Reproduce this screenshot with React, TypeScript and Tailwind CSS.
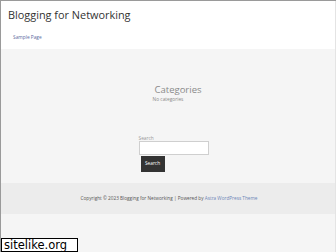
import React from "react";

const font = { fontFamily: '"Open Sans", "Noto Sans", sans-serif' };

export default function App() {
  return (
    <div
      className="relative w-[336px] h-[252px] overflow-hidden bg-[#f5f5f5] border-t border-l border-[#9a9a9a]"
      style={font}
    >
      <div className="border-r border-[#e4e4e4] h-full flex flex-col">
        {/* header */}
        <header className="bg-white h-[48px] px-[7px] pt-[6px]">
          <h1 className="text-[10.9px] leading-[16px] text-[#333]">Blogging for Networking</h1>
          <nav className="mt-[11px] pl-[5px] text-[4.8px] text-[#5b6aa0]">Sample Page</nav>
        </header>

        {/* main */}
        <main className="flex flex-col items-center pt-[35px] h-[134px] pl-[12px]">
          <h2 className="text-[9.5px] leading-[12px] text-[#8a8a8a] ml-[8px]">Categories</h2>
          <p className="text-[4.8px] leading-[6px] text-[#8a8a8a] mr-[12px]">No categories</p>

          <div className="mt-[33px] flex flex-col items-start mr-[1px]">
            <label className="text-[4.8px] leading-[6px] text-[#999]">Search</label>
            <div className="w-[70px] h-[14px] bg-white border border-[#cfcfcf]" />
            <button className="ml-[2px] mt-[1px] w-[24px] h-[16px] bg-[#333] text-white text-[4.8px]">
              Search
            </button>
          </div>
        </main>

        {/* footer */}
        <footer className="bg-[#ececec] h-[31px] flex items-center justify-center text-[4.7px] text-[#555] pl-[2px]">
          <span>
            Copyright © 2023 Blogging for Networking | Powered by{" "}
            <span className="text-[#6d86b8]">Astra WordPress Theme</span>
          </span>
        </footer>
      </div>

      <div
        className="absolute left-0 bottom-0 w-[77px] h-[14px] bg-white border border-black text-[11.5px] leading-[12px] pl-[2px] text-black whitespace-nowrap"
        style={{ fontFamily: '"DejaVu Sans", sans-serif' }}
      >
        sitelike.org
      </div>
    </div>
  );
}
